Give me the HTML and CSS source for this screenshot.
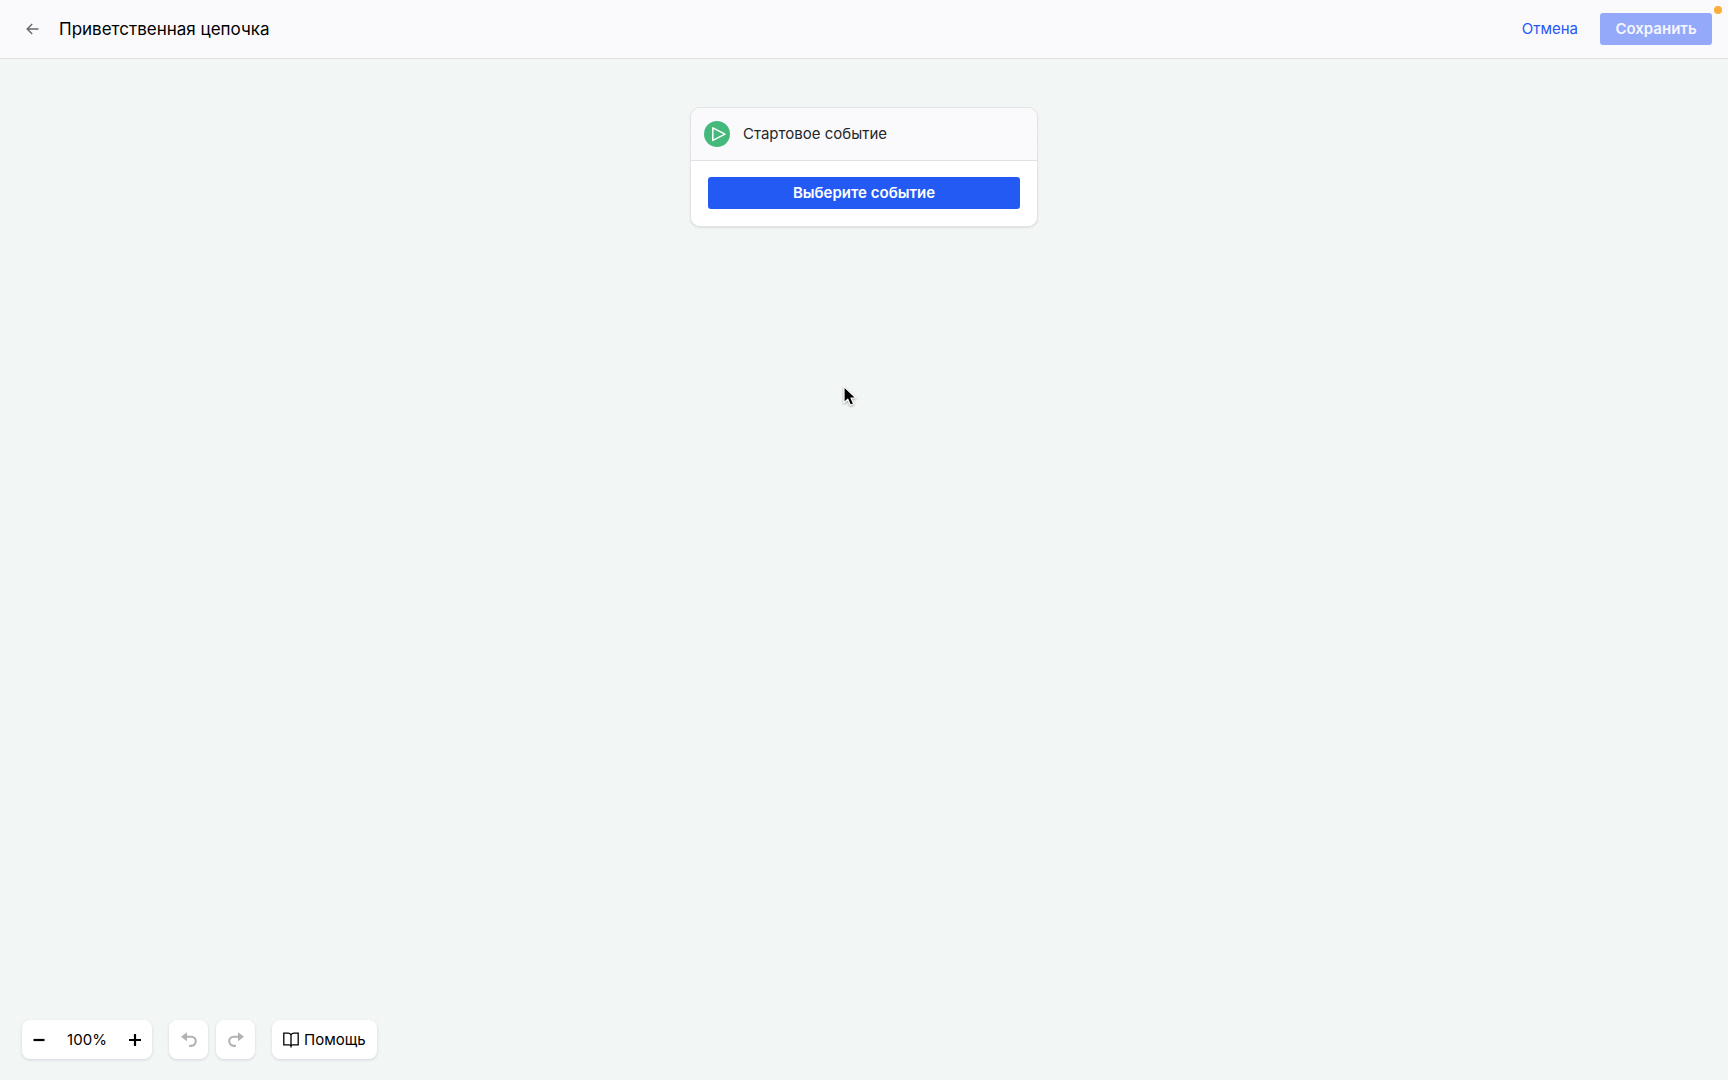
FILE: index.html
```html
<!DOCTYPE html>
<html lang="ru">
<head>
<meta charset="utf-8">
<meta name="viewport" content="width=device-width, initial-scale=1">
<title>Приветственная цепочка</title>
<link rel="stylesheet" href="styles.css">
</head>
<body>
<header class="topbar">
  <a class="back" href="#" aria-label="Назад">
    <svg width="13" height="12" viewBox="0 0 13 12" fill="none" stroke="currentColor" stroke-width="1.4"><path d="M12.500 6H1.500M6.200 1 1.200 6l5 5"/></svg>
  </a>
  <h1 class="title">Приветственная цепочка</h1>
  <button class="cancel" type="button">Отмена</button>
  <button class="save" type="button" disabled>Сохранить</button>
  <span class="indicator"></span>
</header>
<main class="canvas">
  <section class="card">
    <div class="card-head">
      <svg class="play" width="26" height="26" viewBox="0 0 26 26"><circle cx="13" cy="13" r="13" fill="#45b97c"/><path d="M8.800 6.800v12.600L21 13.100z" fill="none" stroke="#fff" stroke-width="1.500" stroke-linejoin="round"/></svg>
      <h2 class="card-title">Стартовое событие</h2>
    </div>
    <div class="card-body">
      <button class="choose" type="button">Выберите событие</button>
    </div>
  </section>
  <svg class="pointer" width="18" height="24" viewBox="0 0 18 24"><path d="M2 1.500v16.200l3.800-3.500 2.600 6 3.200-1.400-2.600-5.800h5z" fill="#000" stroke="#fff" stroke-width="1.200" stroke-linejoin="round"/></svg>
  <div class="tools">
    <div class="panel zoom">
      <button class="zoom-step" type="button" aria-label="Уменьшить"><svg width="14" height="14" viewBox="0 0 14 14"><path d="M1.500 7h11" stroke="currentColor" stroke-width="2.200"/></svg></button>
      <span class="zoom-value">100%</span>
      <button class="zoom-step" type="button" aria-label="Увеличить"><svg width="14" height="14" viewBox="0 0 14 14"><path d="M1 7h12M7 1v12" stroke="currentColor" stroke-width="2.200"/></svg></button>
    </div>
    <div class="history">
      <button class="panel step" type="button" aria-label="Отменить" disabled><svg width="16" height="16" viewBox="0 0 16 16"><path d="M5 4.700h5.200a4.600 4.600 0 0 1 0 9.200H8.200" fill="none" stroke="currentColor" stroke-width="2.100"/><path d="M0 4.700 6 .200v9z" fill="currentColor"/></svg></button>
      <button class="panel step" type="button" aria-label="Повторить" disabled><svg width="16" height="16" viewBox="0 0 16 16"><path d="M11 4.700H5.800a4.600 4.600 0 0 0 0 9.200h2" fill="none" stroke="currentColor" stroke-width="2.100"/><path d="M16 4.700 10 .200v9z" fill="currentColor"/></svg></button>
    </div>
    <button class="panel help" type="button">
      <svg width="16" height="16" viewBox="0 0 16 16" fill="none" stroke="currentColor" stroke-width="1.300"><path d="M8 3v12.500M8 3C7.300 1.600 6.200 1.200 5 1.200H.800v11.600H6c1 0 2 .500 2 1.300 0-.800 1-1.300 2-1.300h5.200V1.200H11c-1.200 0-2.300.400-3 1.800z"/></svg>
      <span>Помощь</span>
    </button>
  </div>
</main>
</body>
</html>
```
FILE: styles.css
```css
* { box-sizing: border-box; }
body {
  margin: 0;
  min-height: 100vh;
  display: flex;
  flex-direction: column;
  font: 15px/20px Inter, "Liberation Sans", sans-serif;
  color: #000;
  background: #f2f6f5;
}
button {
  margin: 0;
  padding: 0;
  border: 0;
  font: inherit;
  color: inherit;
  background: none;
}
svg { display: block; }
h1, h2 { margin: 0; font-weight: 400; }

.topbar {
  position: relative;
  display: flex;
  align-items: center;
  height: 59px;
  padding: 0 16px 0 26px;
  background: #fafafd;
  border-bottom: 1px solid #dfe0e3;
}
.back { color: #66676a; }
.title {
  flex: 1;
  margin-left: 20px;
  font-size: 17px;
  line-height: 24px;
}
.cancel { color: #2457f5; }
.save {
  width: 112px;
  height: 32px;
  margin-left: 22px;
  border-radius: 3px;
  font-weight: 600;
  color: #f5f7ff;
  background: #95a9fb;
}
.indicator {
  position: absolute;
  top: 6px;
  right: 6px;
  width: 8px;
  height: 8px;
  border-radius: 50%;
  background: #fbac3b;
}

.canvas {
  position: relative;
  flex: 1;
  display: flex;
  flex-direction: column;
  justify-content: space-between;
  padding: 48px 22px 21px;
  background: radial-gradient(circle, #fafcfb 1px, transparent 1px) -8px -8px / 16px 16px;
}
.card {
  align-self: center;
  width: 348px;
  border: 1px solid #e3e4e9;
  border-radius: 10px;
  overflow: hidden;
  background: #fff;
  box-shadow: 0 1px 2px #0000001a;
}
.card-head {
  display: flex;
  align-items: center;
  gap: 13px;
  height: 53px;
  padding: 0 13px;
  background: #fafafd;
  border-bottom: 1px solid #e0e1e5;
}
.card-title {
  font-size: 15px;
  line-height: 20px;
  color: #26272a;
}
.card-body { padding: 16px 17px 17px; }
.choose {
  width: 100%;
  height: 32px;
  border-radius: 3px;
  font-weight: 600;
  color: #fff;
  background: #235af4;
}
.pointer {
  position: absolute;
  left: calc(50% - 22px);
  top: 326px;
  filter: drop-shadow(0 1px 1px #00000055);
}

.tools { display: flex; gap: 17px; }
.panel {
  height: 39px;
  border-radius: 8px;
  background: #fff;
  box-shadow: 0 1px 3px #1c1c5026;
}
.zoom {
  display: flex;
  align-items: center;
  justify-content: space-between;
  width: 130px;
  padding: 0 10px;
}
.history { display: flex; gap: 8px; }
.step {
  display: flex;
  align-items: center;
  justify-content: center;
  width: 39px;
  color: #b2b2b3;
}
.help {
  display: flex;
  align-items: center;
  gap: 5px;
  padding: 0 11px;
}
```
